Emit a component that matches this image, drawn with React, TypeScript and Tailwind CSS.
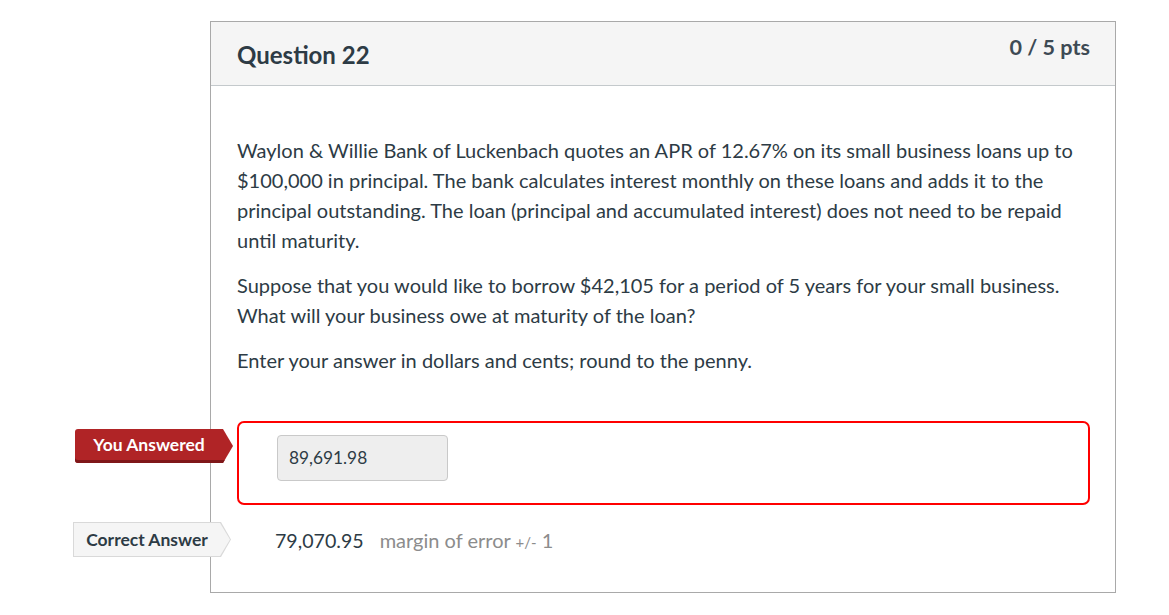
import React from 'react'

const ink = 'text-[#2d3b45]'

function ArrowLabel({ kind, children }: { kind: 'wrong' | 'correct'; children: React.ReactNode }) {
  const shape = '[clip-path:polygon(0_0,calc(100%-10px)_0,100%_50%,calc(100%-10px)_100%,0_100%)]'
  if (kind === 'wrong') {
    return (
      <div
        className={`${shape} w-[158px] h-[34px] bg-[#b02426] [box-shadow:inset_0_-3px_0_#7f1719] rounded-l-[3px] flex items-center pr-[10px]`}
      >
        <span className="flex-1 text-center text-white font-bold text-[17.5px] leading-none pb-[3px]">{children}</span>
      </div>
    )
  }
  return (
    <div className={`${shape} relative w-[158px] h-[35px] bg-[#d9d9d9]`}>
      <div className={`${shape} absolute inset-[1px] bg-[#f5f5f5] flex items-center pr-[10px]`}>
        <span className={`flex-1 text-center font-bold text-[17.5px] leading-none ${ink}`}>{children}</span>
      </div>
    </div>
  )
}

export default function App() {
  return (
    <div className="min-h-screen bg-white font-['Lato',sans-serif] pt-[21px] pl-[210px]">
      <div className="w-[906px] h-[572px] border border-[#a9a9a9]">
        <div className="h-[64px] bg-[#f5f5f5] border-b border-[#c4c9cc] flex justify-between pl-[26px] pr-[25px]">
          <h2 className={`pt-[19px] text-[24px] leading-[28px] font-bold ${ink}`}>Question 22</h2>
          <div className="pt-[12px] text-[21.6px] leading-[26px] font-bold text-[#3d4a54]">0 / 5 pts</div>
        </div>

        <div className={`pl-[26px] pr-[25px] pt-[49px] text-[20px] leading-[30px] ${ink}`}>
          <p className="mb-[15px]">
            Waylon &amp; Willie Bank of Luckenbach quotes an APR of 12.67% on its small business loans up to
            $100,000 in principal. The bank calculates interest monthly on these loans and adds it to the
            principal outstanding. The loan (principal and accumulated interest) does not need to be repaid
            until maturity.
          </p>
          <p className="mb-[15px]">
            Suppose that you would like to borrow $42,105 for a period of 5 years for your small business.
            What will your business owe at maturity of the loan?
          </p>
          <p className="mb-[15px]">Enter your answer in dollars and cents; round to the penny.</p>

          <div className="relative mt-[46px]">
            <div className="absolute left-[-162px] top-[8px]">
              <ArrowLabel kind="wrong">You Answered</ArrowLabel>
            </div>
            <div className="w-[853px] h-[84px] border-2 border-[#ff0000] rounded-[7px] pl-[38px] pt-[12px]">
              <div
                className={`w-[171px] h-[46px] bg-[#eeeeee] border border-[#c9c9c9] rounded-[4px] pl-[11px] flex items-center text-[17.3px] ${ink}`}
              >
                89,691.98
              </div>
            </div>
          </div>

          <div className="relative mt-[17px] h-[34px]">
            <div className="absolute left-[-164px] top-0">
              <ArrowLabel kind="correct">Correct Answer</ArrowLabel>
            </div>
            <div className="pl-[38px] pt-[3px] flex items-baseline">
              <span className={`text-[19.6px] ${ink}`}>79,070.95</span>
              <span className="ml-[16px] text-[#8c8c8c]">
                margin of error <span className="text-[15px]">+/-</span> 1
              </span>
            </div>
          </div>
        </div>
      </div>
    </div>
  )
}
